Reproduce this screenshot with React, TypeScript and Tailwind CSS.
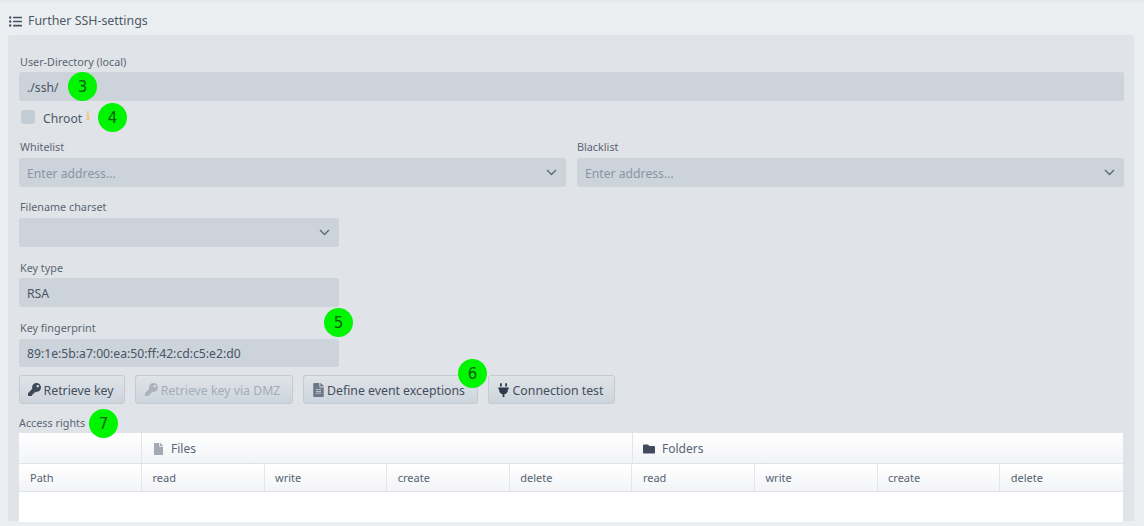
import { FaKey, FaFile, FaFileAlt, FaPlug, FaFolder, FaListUl, FaInfo } from 'react-icons/fa';
import type { ReactNode } from 'react';

const Label = ({ children, className = '' }: { children: ReactNode; className?: string }) => (
  <div className={`text-[10.8px] leading-[14px] text-[#5b6573] ${className}`}>{children}</div>
);

const Chevron = () => (
  <svg width="11" height="7" viewBox="0 0 11 7" className="text-[#5a6675]">
    <path d="M1 1l4.5 4.5L10 1" fill="none" stroke="currentColor" strokeWidth="1.3" />
  </svg>
);

const Field = ({ value, placeholder, select, h = 'h-[29px]', pad = 'pt-[3px]' }: { value?: string; placeholder?: string; select?: boolean; h?: string; pad?: string }) => (
  <div className={`${h} flex items-center justify-between rounded-[3px] bg-[#ccd3db] pl-2 pr-[9px] text-[12.2px]`}>
    <span className={`${pad} ${value ? 'text-[#4a5463]' : 'text-[#8a95a3]'}`}>{value || placeholder}</span>
    {select && <Chevron />}
  </div>
);

const Btn = ({ icon, children, disabled, w }: { icon: ReactNode; children: ReactNode; disabled?: boolean; w: string }) => (
  <div className={`${w} flex h-[29px] items-center justify-center gap-[3px] rounded-[3px] border border-[#c3cad3] bg-gradient-to-b from-[#e0e4e9] to-[#cdd4dc] pr-[3px] text-[12.3px] ${disabled ? 'text-[#a3adb9]' : 'text-[#434d5c]'}`}>
    {icon}
    <span className="pt-[3px]">{children}</span>
  </div>
);

const Badge = ({ n, className }: { n: number; className: string }) => (
  <div className={`absolute flex h-[29px] w-[29px] items-center justify-center rounded-full bg-[#00f600] pt-px font-['DejaVu_Sans',sans-serif] text-[15px] text-[#0b5e0b] ${className}`}>{n}</div>
);

const subCols = ['read', 'write', 'create', 'delete', 'read', 'write', 'create', 'delete'];

export default function App() {
  return (
    <div className="h-[526px] w-[1144px] overflow-hidden bg-[#eaeef1] font-['Noto_Sans',sans-serif]">
      <div className="flex h-[35px] items-center gap-[6px] border-t-2 border-[#e4e8ec] pl-[9px] pt-[5px] text-[12.4px] text-[#4f5967]">
        <FaListUl className="h-[13px] w-[13px] text-[#465060]" />
        <span>Further SSH-settings</span>
      </div>

      <div className="relative ml-2 h-[486px] w-[1126px] rounded-t-[3px] bg-[#e0e4e8] pl-[11px] pr-[10px] pt-[20px]">
        <Label className="mb-[3px] pl-px">User-Directory (local)</Label>
        <Field value="./ssh/" />
        <div className="mt-[9px] flex h-[14px] items-center pl-[2px]">
          <div className="h-[14px] w-[14px] rounded-[3px] bg-[#c4ccd5]" />
          <span className="ml-2 pt-[4px] text-[12.2px] text-[#4c5869]">Chroot</span>
          <FaInfo className="mb-[3px] ml-[3px] h-[9px] w-[6px] text-[#f0c48a]" />
        </div>

        <div className="mt-[16px] grid grid-cols-2 gap-[11px]">
          <div>
            <Label className="mb-[4px] pl-px">Whitelist</Label>
            <Field placeholder="Enter address..." select />
          </div>
          <div>
            <Label className="mb-[4px]">Blacklist</Label>
            <Field placeholder="Enter address..." select />
          </div>
        </div>

        <div className="w-[320px]">
          <Label className="mb-[4px] mt-[13px] pl-px">Filename charset</Label>
          <Field select />
          <Label className="mb-[3px] mt-[14px] pl-px">Key type</Label>
          <Field value="RSA" />
          <Label className="mb-[4px] mt-[14px] pl-px">Key fingerprint</Label>
          <Field value="89:1e:5b:a7:00:ea:50:ff:42:cd:c5:e2:d0" h="h-[28px]" pad="pt-[2px]" />
        </div>

        <div className="mt-2 flex gap-[10px]">
          <Btn w="w-[106px]" icon={<FaKey className="h-[13px] w-[13px] text-[#3f4958]" />}>Retrieve key</Btn>
          <Btn w="w-[158px]" disabled icon={<FaKey className="h-[13px] w-[13px] text-[#a9b2bd]" />}>Retrieve key via DMZ</Btn>
          <Btn w="w-[175px]" icon={<FaFileAlt className="h-[14px] w-[11px] text-[#6d7785]" />}>Define event exceptions</Btn>
          <Btn w="w-[127px]" icon={<FaPlug className="h-[14px] w-[13px] text-[#2f3947]" />}>Connection test</Btn>
        </div>

        <Label className="mb-[3px] mt-3">Access rights</Label>
        <div className="h-[89px] w-[1104px] rounded-t-[3px] bg-white text-[#586373]">
          <div className="grid h-[31px] grid-cols-[122px_491px_491px] border-b border-[#dfe2e8] bg-gradient-to-b from-white to-[#f3f4f7] text-[12px]">
            <div />
            <div className="flex items-center gap-2 border-l border-[#e2e5ea] pl-3 pt-px">
              <FaFile className="h-[12px] w-[9px] text-[#a3a9b2]" />
              <span>Files</span>
            </div>
            <div className="flex items-center gap-[7px] border-l border-[#e2e5ea] pl-[10px] pt-px">
              <FaFolder className="h-[12px] w-[12px] text-[#414b5b]" />
              <span>Folders</span>
            </div>
          </div>
          <div className="grid h-[28px] grid-cols-[122px_repeat(8,122.6px)] border-b border-[#dfe2e8] bg-gradient-to-b from-white to-[#f3f4f7] text-[11px]">
            <div className="flex items-center pl-[11px] pt-px">Path</div>
            {subCols.map((c, i) => (
              <div key={i} className="flex items-center border-l border-[#e2e5ea] pl-[10.5px] pt-px">{c}</div>
            ))}
          </div>
        </div>

        <Badge n={3} className="left-[60px] top-[37px]" />
        <Badge n={4} className="left-[90px] top-[68px]" />
        <Badge n={5} className="left-[316px] top-[273px]" />
        <Badge n={6} className="left-[450px] top-[324px]" />
        <Badge n={7} className="left-[81px] top-[374px]" />
      </div>
    </div>
  );
}
